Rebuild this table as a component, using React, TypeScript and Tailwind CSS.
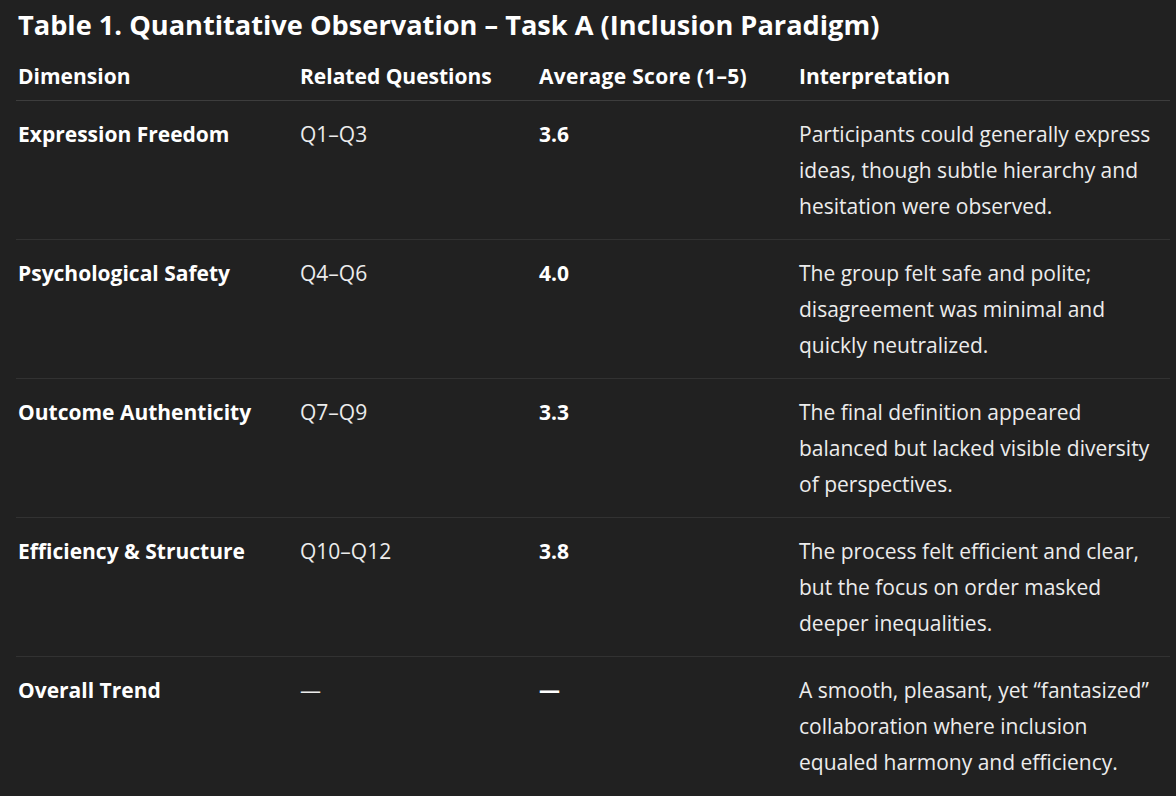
import React from 'react'

const rows = [
    {
        dim: 'Expression Freedom',
        q: 'Q1–Q3',
        score: '3.6',
        text: 'Participants could generally express ideas, though subtle hierarchy and hesitation were observed.',
    },
    {
        dim: 'Psychological Safety',
        q: 'Q4–Q6',
        score: '4.0',
        text: 'The group felt safe and polite; disagreement was minimal and quickly neutralized.',
    },
    {
        dim: 'Outcome Authenticity',
        q: 'Q7–Q9',
        score: '3.3',
        text: 'The final definition appeared balanced but lacked visible diversity of perspectives.',
    },
    {
        dim: 'Efficiency & Structure',
        q: 'Q10–Q12',
        score: '3.8',
        text: 'The process felt efficient and clear, but the focus on order masked deeper inequalities.',
    },
    {
        dim: 'Overall Trend',
        q: '—',
        score: '—',
        text: 'A smooth, pleasant, yet “fantasized” collaboration where inclusion equaled harmony and efficiency.',
    },
]

const grid = 'grid grid-cols-[282px_239px_260px_1fr]'

const App = () => {
    return (
        <div className="min-h-screen bg-[#212121] text-[#ececec] font-['Open_Sans','Liberation_Sans',sans-serif] pl-[16px] pr-[6px]">
            <h1 className="pt-[8px] pl-[2px] text-[27.2px] leading-[34px] font-bold text-white">
                Table 1. Quantitative Observation – Task A (Inclusion Paradigm)
            </h1>
            <div className={`${grid} mt-[19px] pb-[9px] border-b border-[#3d3d3d] text-[21px] leading-[30px] font-bold text-white`}>
                <div className="pl-[2px]">Dimension</div>
                <div className="pl-[2px]">Related Questions</div>
                <div className="pl-[2px] tracking-[0.3px]">Average Score (1–5)</div>
                <div className="pl-[2px]">Interpretation</div>
            </div>
            {rows.map((r, i) => (
                <div
                    key={r.dim}
                    className={`${grid} py-[15px] text-[21px] leading-[36px] ${i < rows.length - 1 ? 'border-b border-[#323232]' : ''}`}
                >
                    <div className="pl-[2px] font-bold text-white">{r.dim}</div>
                    <div className="pl-[2px]">{r.q}</div>
                    <div className="pl-[2px] font-bold text-white">{r.score}</div>
                    <div className="pl-[2px] pr-[6px]">{r.text}</div>
                </div>
            ))}
        </div>
    )
}

export default App
